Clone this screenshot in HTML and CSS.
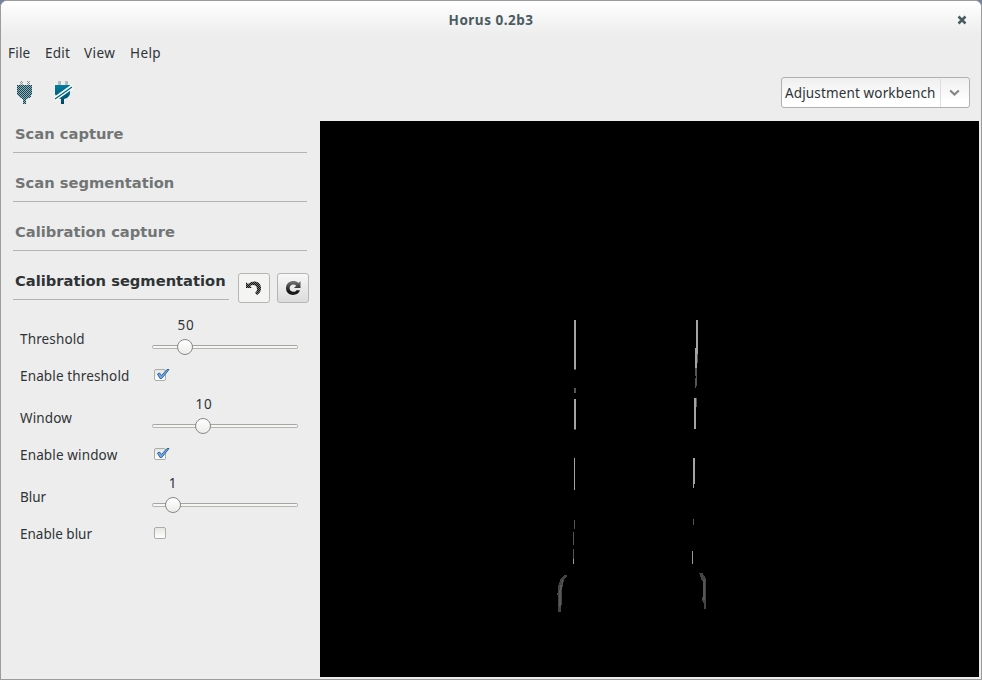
FILE: index.html
```html
<!DOCTYPE html>
<html lang="en">
<head>
<meta charset="utf-8">
<title>Horus 0.2b3</title>
<link rel="stylesheet" href="styles.css">
</head>
<body>
<div class="window">
  <header class="titlebar">
    <span></span>
    <h1 class="title">Horus 0.2b3</h1>
    <svg class="close" width="10" height="10" viewBox="0 0 10 10"><path d="M1.500 1.500L8.500 8.500M8.500 1.500L1.500 8.500" stroke="#4a5c62" stroke-width="2.500"/></svg>
  </header>
  <nav class="menu"><span>File</span><span>Edit</span><span class="m-view">View</span><span class="m-help">Help</span></nav>
  <div class="toolbar">
    <svg class="plug" width="24" height="26" viewBox="0 0 24 26">
      <defs>
        <pattern id="dither" width="2" height="2" patternUnits="userSpaceOnUse"><path d="M0 0h1v1H0zM1 1h1v1H1z" fill="#174450"/><path d="M1 0h1v1H1zM0 1h1v1H0z" fill="#8fb0b8"/></pattern>
        <pattern id="ditherlight" width="2" height="2" patternUnits="userSpaceOnUse"><path d="M0 0h1v1H0zM1 1h1v1H1z" fill="#8d8d8d"/></pattern>
      </defs>
      <path d="M4 1h3v4H4zM11 1h3v4H11z" fill="url(#ditherlight)"/>
      <path d="M1 5h15v9l-1 2-2 2-3 1v5H7v-5l-3-1-2-2-1-2z" fill="url(#dither)" shape-rendering="crispEdges"/>
    </svg>
    <svg class="plug" width="24" height="26" viewBox="0 0 24 26">
      <defs><linearGradient id="teal" x2="0" y2="1"><stop stop-color="#007da0"/><stop offset="1" stop-color="#004560"/></linearGradient></defs>
      <path d="M4 1h3v4H4zM11 1h3v4H11z" fill="#b9b9b9"/>
      <path d="M1 5h15v9l-1 2-2 2-3 1v5H7v-5l-3-1-2-2-1-2z" fill="url(#teal)"/>
      <path d="M1.500 18.500L17 7.500" stroke="#fff" stroke-width="4.200" stroke-linecap="round"/>
      <path d="M1 19L18 7" stroke="#006684" stroke-width="1.400"/>
    </svg>
    <div class="combo">
      <span class="combo-text">Adjustment workbench</span>
      <span class="combo-arrow"><svg width="11" height="8" viewBox="0 0 11 8"><path d="M1.200 1.500L5.500 5.600L9.800 1.500" fill="none" stroke="#858581" stroke-width="2.100"/></svg></span>
    </div>
  </div>
  <main class="main">
    <aside class="side">
      <h2 class="head">Scan capture</h2>
      <h2 class="head">Scan segmentation</h2>
      <h2 class="head">Calibration capture</h2>
      <div class="active-row">
        <h2 class="head active">Calibration segmentation</h2>
        <button class="btn flat" aria-label="Undo"><svg width="18" height="16" viewBox="0 0 18 16">
          <defs><pattern id="ditherdark" width="2" height="2" patternUnits="userSpaceOnUse"><path d="M0 0h2v2H0z" fill="#111"/><path d="M1 0h1v1H1zM0 1h1v1H0z" fill="#777"/></pattern></defs>
          <path d="M1 2v6h6L5 6c3-2 7-1 7 3 0 2-1 3-2 4l2 2c3-2 4-4 4-7 0-6-7-9-13-4z" fill="url(#ditherdark)"/></svg></button>
        <button class="btn" aria-label="Reset"><svg width="16" height="16" viewBox="0 0 16 16">
          <defs><linearGradient id="ink" x2="0" y2="1"><stop stop-color="#777"/><stop offset=".75" stop-color="#171717"/></linearGradient></defs>
          <path d="M15.500 1v7H9l2.300-2.300C8.500 3.200 4.600 4.800 4.600 8.300c0 3.800 5.400 4.700 6.800 2h3.500C13.600 16.600 1 17 1 8.300 1 1.200 9.400-.8 13.500 3z" fill="url(#ink)"/></svg></button>
      </div>
      <div class="params">
        <section class="param">
          <span class="label">Threshold</span>
          <div class="slider"><span class="value" style="margin-left:13px">50</span><div class="track"><i class="knob" style="margin-left:24px"></i></div></div>
          <span class="label second">Enable threshold</span>
          <div class="check"><svg width="16" height="14" viewBox="0 0 16 14"><path d="M3.500 6l2-1 2 2.500L13 1.500h2L7.800 10.500H6z" fill="#74a9e0" stroke="#2d66a8" stroke-width="1"/></svg></div>
        </section>
        <section class="param">
          <span class="label">Window</span>
          <div class="slider"><span class="value" style="margin-left:31px">10</span><div class="track"><i class="knob" style="margin-left:42px"></i></div></div>
          <span class="label second">Enable window</span>
          <div class="check"><svg width="16" height="14" viewBox="0 0 16 14"><path d="M3.500 6l2-1 2 2.500L13 1.500h2L7.800 10.500H6z" fill="#74a9e0" stroke="#2d66a8" stroke-width="1"/></svg></div>
        </section>
        <section class="param">
          <span class="label plain">Blur</span>
          <div class="slider"><span class="value" style="margin-left:0px">1</span><div class="track"><i class="knob" style="margin-left:12px"></i></div></div>
          <span class="label second plain">Enable blur</span>
          <div class="check"></div>
        </section>
      </div>
    </aside>
    <svg class="view" width="659" height="556" viewBox="320 121 659 556" shape-rendering="crispEdges">
      <path d="M320 121h659v556H320z" fill="#000"/>
      <path d="M574 320h2v49h-2zM574 399h2v30h-2zM574 458h1v32h-1zM696 320h2v34h-1v14h-2v-20h1zM694 398h2v31h-2zM693 458h2v26h-1v4h-1z" fill="#a4a4a4"/>
      <path d="M574 388h2v5h-2zM574 520h1v9h-1zM573 532h1v13h-1zM573 549h1v11h-1zM693 519h1v6h-1zM697 354h1v9h-1zM696 368h1v18h-1v2h-1v-10h1v-2h-1v-8zM574 369h2v1h-2zM574 429h2v1h-2zM696 398h1v9h-1z" fill="#555"/>
      <path d="M573 559h1v5h-1zM692 551h1v13h-1z" fill="#999"/>
      <path d="M564 575h3v2l-3 2-1 6-1 4v16h-1v7h-3v-16l-1-2 1-2v-5l2-6 1-3z" fill="#444"/>
      <path d="M562 580h1v4h-1zM559 590h2v17h-2zM560 585h2v5h-2z" fill="#595959"/>
      <path d="M699 573h4v2l2 1 1 3v30h-2v-5l-2-4v-3h1v-15l-2-3-1-4z" fill="#444"/>
      <path d="M703 580h2v20h-2z" fill="#555"/>
    </svg>
  </main>
</div>
</body>
</html>
```
FILE: styles.css
```css
* { box-sizing: border-box; }
body {
  margin: 0;
  background: #7282a0;
  font: 13.500px/20px "Noto Sans", sans-serif;
  color: #2e3436;
}
h1, h2 { margin: 0; font-size: inherit; }
svg { display: block; }
.window {
  width: 982px;
  height: 680px;
  border: 1px solid #9c9c9c;
  border-radius: 7px 7px 0 0;
  background: #ededed;
  overflow: hidden;
}
.titlebar {
  height: 38px;
  display: grid;
  grid-template-columns: 1fr auto 1fr;
  align-items: center;
  background: linear-gradient(#fff, #ededed 90%);
}
.title { font-weight: 700; letter-spacing: .5px; color: #4a5c62; white-space: nowrap; }
.close { justify-self: end; margin-right: 14px; }
.menu {
  height: 30px;
  padding: 4px 7px;
  display: grid;
  grid-template-columns: 37px 39px 46px 40px;
  letter-spacing: .2px;
}
.m-view, .m-help { letter-spacing: .4px; }
.toolbar {
  height: 52px;
  padding: 8px 11px 0 15px;
  display: flex;
}
.plug { margin: 3px 14px 0 0; }
.combo {
  width: 189px;
  height: 31px;
  margin-left: auto;
  display: flex;
  align-items: center;
  border: 1px solid #b0b0ae;
  border-radius: 3px;
  background: linear-gradient(#efefef, #fff 80%);
}
.combo-text { width: 158px; padding-left: 3px; letter-spacing: .14px; white-space: nowrap; }
.combo-arrow {
  flex: 1;
  height: 28px;
  padding-right: 2px;
  display: flex;
  align-items: center;
  justify-content: center;
  border-left: 1px solid #ddd;
}
.main { display: grid; grid-template-columns: 319px 659px; height: 556px; }
.side { padding-left: 12px; }
.head {
  width: 294px;
  height: 49px;
  padding: 19px 0 0 2px;
  border-bottom: 1px solid #b3b3b2;
  font: 700 14.700px/22px "DejaVu Sans", sans-serif;
  color: #717575;
  white-space: nowrap;
}
.side > .head:first-child { height: 32px; padding-top: 2px; }
.active-row { display: flex; height: 53px; }
.head.active { width: 216px; margin-right: 9px; color: #2e3436; }
.btn {
  width: 32px;
  height: 30px;
  margin: 22px 7px 0 0;
  padding: 0;
  display: flex;
  align-items: center;
  justify-content: center;
  border: 1px solid #b5b5b3;
  border-radius: 3px;
  background: linear-gradient(#f7f7f7, #dcdcdc);
}
.btn.flat { background: #f4f4f2; }
.params { padding: 11px 0 0 7px; }
.param {
  height: 79px;
  display: grid;
  grid-template-columns: 132px 146px;
  grid-template-rows: 46px 33px;
}
.label { padding-top: 14px; letter-spacing: .14px; white-space: nowrap; }
.label.second { padding-top: 5px; }
.label.plain { letter-spacing: 0; }
.value { display: block; width: 42px; text-align: center; letter-spacing: .8px; }
.track {
  width: 146px;
  height: 4px;
  margin-top: 10px;
  display: flex;
  align-items: center;
  border: 1px solid #b4b4b1;
  border-top-color: #a5a5a2;
  border-radius: 2px;
  background: #f5f5f4;
}
.knob {
  width: 16px;
  height: 16px;
  flex: none;
  border: 1px solid #888983;
  border-radius: 50%;
  background: linear-gradient(#fff, #ececeb);
}
.check {
  width: 12px;
  height: 12px;
  margin: 8px 0 0 2px;
  border: 1px solid #acaea6;
  border-radius: 2px;
  background: linear-gradient(#e6e6e4, #fff);
}
.check svg { margin: -2px 0 0 -1px; }
```
